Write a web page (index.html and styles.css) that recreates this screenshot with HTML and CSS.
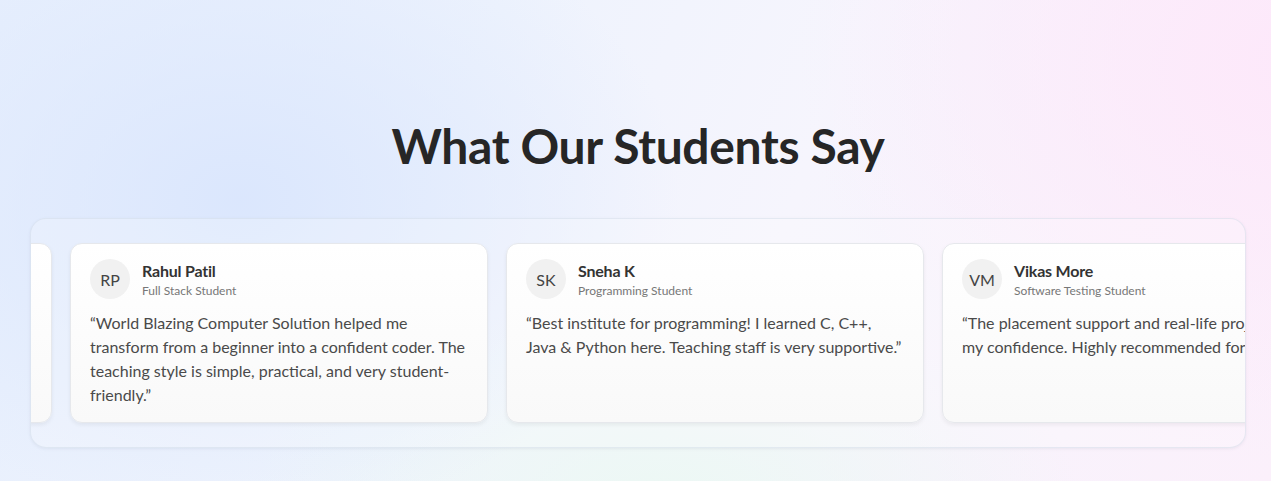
FILE: index.html
```html
<!DOCTYPE html>
<html lang="en">
<head>
<meta charset="utf-8">
<title>What Our Students Say</title>
<link rel="stylesheet" href="styles.css">
</head>
<body>
<section class="testimonials">
  <h2 class="title">What Our Students Say</h2>
  <div class="carousel">
    <div class="track">
      <article class="card">
        <div class="head">
          <div class="avatar">AS</div>
          <div class="who"><div class="name">Amit Shinde</div><div class="role">Web Development Student</div></div>
        </div>
        <p class="quote">“The trainers explain every concept clearly and the practical sessions made learning easy and fun.”</p>
      </article>
      <article class="card">
        <div class="head">
          <div class="avatar">RP</div>
          <div class="who"><div class="name">Rahul Patil</div><div class="role">Full Stack Student</div></div>
        </div>
        <p class="quote">“World Blazing Computer Solution helped me transform from a beginner into a confident coder. The teaching style is simple, practical, and very student-friendly.”</p>
      </article>
      <article class="card">
        <div class="head">
          <div class="avatar">SK</div>
          <div class="who"><div class="name">Sneha K</div><div class="role">Programming Student</div></div>
        </div>
        <p class="quote">“Best institute for programming! I learned C, C++, Java &amp; Python here. Teaching staff is very supportive.”</p>
      </article>
      <article class="card">
        <div class="head">
          <div class="avatar">VM</div>
          <div class="who"><div class="name">Vikas More</div><div class="role">Software Testing Student</div></div>
        </div>
        <p class="quote">“The placement support and real-life projects boosted my confidence. Highly recommended for freshers.”</p>
      </article>
    </div>
  </div>
</section>
</body>
</html>
```
FILE: styles.css
```css
* { box-sizing: border-box; }
html, body { margin: 0; height: 100%; }
body {
  font-family: Lato, "Open Sans", Arial, sans-serif;
  color: #222;
  background:
    radial-gradient(ellipse 440px 320px at 240px 200px, rgba(218,230,253,0.95), rgba(218,230,253,0) 100%),
    radial-gradient(ellipse 420px 200px at 660px 500px, rgba(236,248,244,1), rgba(236,248,244,0) 100%),
    radial-gradient(ellipse 500px 400px at 1300px 60px, rgba(253,232,250,1), rgba(253,232,250,0) 100%),
    linear-gradient(110deg, #e7effd 0%, #eef3fd 35%, #f6f5fd 60%, #fbf0fb 100%);
  overflow: hidden;
}
.testimonials {
  padding: 116px 25px 0 30px;
}
.title {
  margin: 0 0 42px;
  text-align: center;
  font-size: 48px;
  line-height: 60px;
  font-weight: 700;
  color: #262626;
  letter-spacing: -0.35px;
}
.carousel {
  border-radius: 16px;
  background: rgba(255,255,255,0.22);
  border: 1px solid rgba(205,214,228,0.45);
  box-shadow: 0 1px 3px rgba(120,130,160,0.12);
  padding: 24px 0;
  overflow: hidden;
}
.track {
  display: flex;
  gap: 18px;
  transform: translateX(-397px);
}
.card {
  flex: 0 0 418px;
  height: 180px;
  background: linear-gradient(#ffffff, #f9f9f9);
  border: 1px solid #e6e8ec;
  border-radius: 12px;
  box-shadow: 0 2px 4px rgba(0,0,0,0.06);
  padding: 15px 19px;
}
.head {
  display: flex;
  align-items: flex-start;
  gap: 12px;
}
.avatar {
  flex: 0 0 40px;
  width: 40px;
  height: 40px;
  border-radius: 50%;
  background: #f1f1f1;
  display: flex;
  align-items: center;
  justify-content: center;
  font-size: 16px;
  color: #444;
}
.who { display: flex; flex-direction: column; margin-top: 2px; }
.name { font-size: 16px; font-weight: 700; color: #333; line-height: 20px; letter-spacing: -0.2px; }
.role { font-size: 12px; color: #777; line-height: 16px; margin-top: 2px; }
.quote {
  margin: 12px 0 0;
  font-size: 16px;
  line-height: 24px;
  color: #4a4a4a;
}
```
